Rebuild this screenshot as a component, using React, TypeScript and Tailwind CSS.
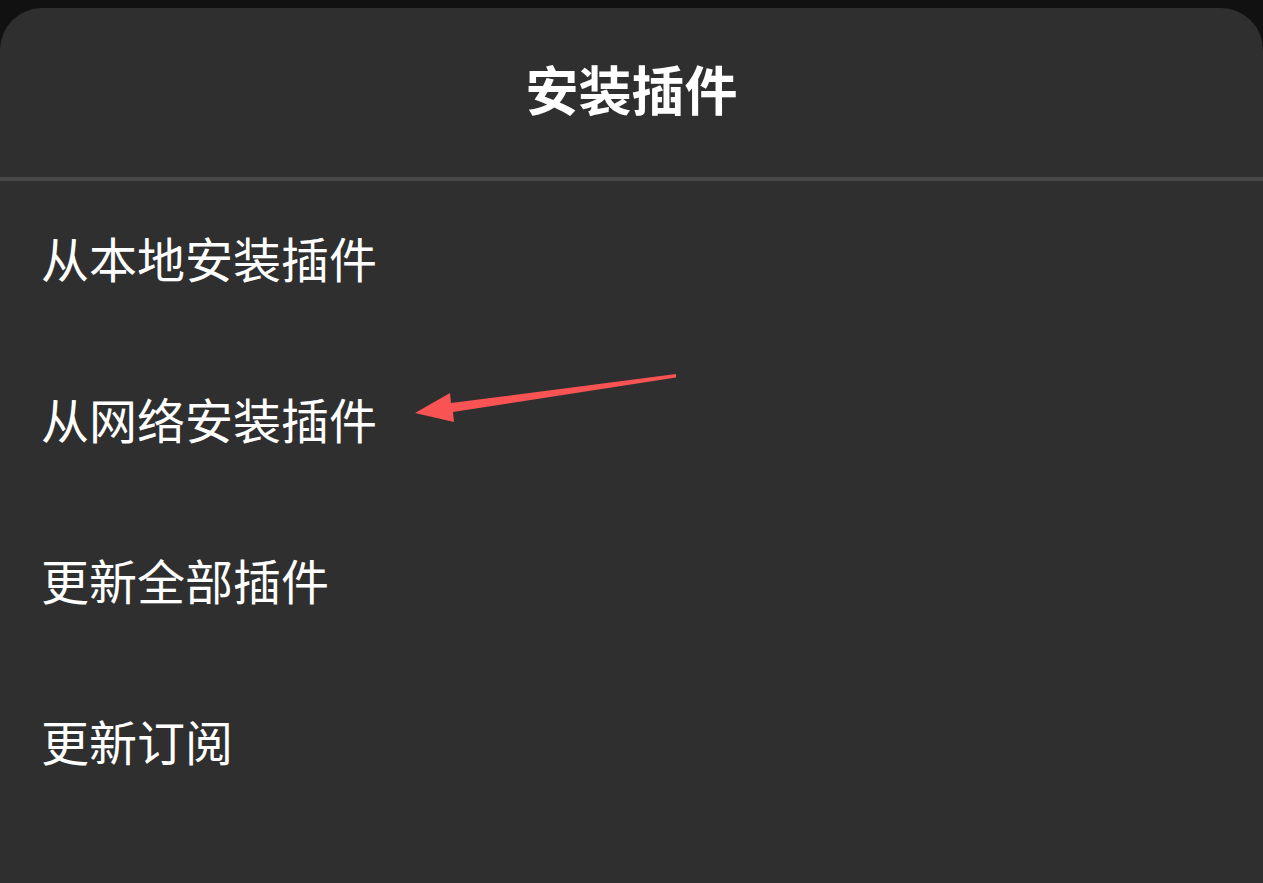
const items = ['从本地安装插件', '从网络安装插件', '更新全部插件', '更新订阅'];

export default function App() {
  return (
    <div
      className="relative h-screen w-full overflow-hidden bg-[#111111] pt-2"
      style={{ fontFamily: '"Noto Sans CJK SC", "Noto Sans", sans-serif' }}
    >
      <div className="h-full rounded-t-[42px] bg-[#2f2f2f]">
        {/* header */}
        <div className="flex h-[169px] items-center justify-center pb-[8px]">
          <h1 className="text-[53px] font-bold leading-none text-white">安装插件</h1>
        </div>
        <div className="h-[4px] bg-[#484848]" />

        {/* menu */}
        <ul>
          {items.map((item) => (
            <li key={item} className="flex h-[161px] items-center pb-[10px] pl-[41px] text-[48px] leading-none text-white">
              {item}
            </li>
          ))}
        </ul>
      </div>

      {/* annotation arrow */}
      <svg className="pointer-events-none absolute left-0 top-0" width="1263" height="883">
        <polygon
          points="415,413 450,393 451,403 676,374 676,377.5 453,412 454,422"
          fill="#f95353"
        />
      </svg>
    </div>
  );
}
